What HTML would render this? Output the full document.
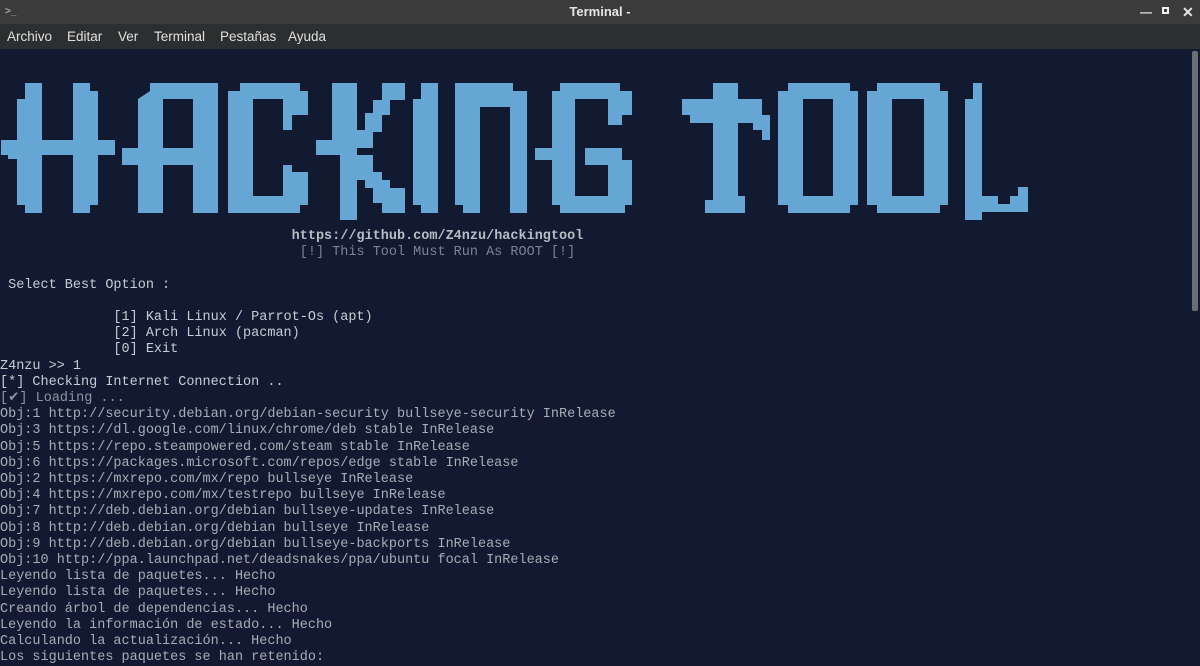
<!DOCTYPE html>
<html><head><meta charset="utf-8"><style>
*{margin:0;padding:0}
body{width:1200px;height:662px;overflow:hidden;background:#111a30;position:relative;font-family:"Liberation Sans",sans-serif}
#tb{position:absolute;left:0;top:0;width:1200px;height:24px;background:#3b3b3b;color:#e6e6e6;font-size:13px;font-weight:bold;text-align:center;line-height:24px}
#mb{position:absolute;left:0;top:24px;width:1200px;height:25px;background:#2c2e30;color:#e0e0e0;font-size:13.5px;line-height:25px}
#mb span{position:absolute;top:0}
pre{position:absolute;left:0;top:229px;font-family:"Liberation Mono",monospace;font-size:13.5px;line-height:16.2px;color:#c9ccd2}
.g{color:#a7acb6}.d{color:#8f94a0}.p{color:#7c8198}.b{font-weight:bold;color:#b8bcc4}
#sb{position:absolute;left:1192px;top:51px;width:6px;height:260px;background:#6a6e74;border-radius:2px}
</style></head><body>
<div id="tb"><span style="position:absolute;left:5px;top:0;font-size:10px;color:#aaa">&gt;_</span>Terminal -
<span style="position:absolute;left:1140px;top:0;font-size:12px">&#8212;</span>
<span style="position:absolute;left:1162px;top:7px;width:7px;height:7px;border:2px solid #eee;box-sizing:border-box"></span>
<span style="position:absolute;left:1182px;top:0;font-size:14px">&#10005;</span></div>
<div id="mb"><span style="left:7px">Archivo</span><span style="left:67px">Editar</span><span style="left:118px">Ver</span><span style="left:154px">Terminal</span><span style="left:220px">Pestañas</span><span style="left:288px">Ayuda</span></div>
<svg style="position:absolute;left:0;top:0" width="1200" height="240" fill="#65a6d4">
<polygon points="25,83 42,83 42,213 25,213 25,205 17,205 17,99 25,99"/>
<polygon points="73,83 90,83 90,91 98,91 98,205 90,205 90,213 73,213"/>
<rect x="1" y="140" width="114" height="15"/><rect x="8" y="155" width="34" height="4"/>
<polygon points="150,83 218,83 218,213 193,213 193,99 163,99 163,213 138,213 138,99 150,91"/>
<rect x="122" y="148" width="96" height="17"/>
<polygon points="240,83 300,83 300,91 308,91 308,115 292,115 292,130 283,130 283,99 253,99 253,196 283,196 283,165 292,165 292,172 308,172 308,205 300,205 300,213 228,213 228,91 240,91"/>
<polygon points="332,83 357,83 357,220 340,220 340,155 316,155 316,140 332,140"/>
<polygon points="357,130 365,130 365,113 373,113 373,100 382,100 382,83 405,83 405,100 390,100 390,115 382,115 382,132 373,132 373,148 357,148"/>
<polygon points="357,155 373,155 373,172 382,172 382,180 390,180 390,188 405,188 405,213 382,213 382,203 373,203 373,188 365,188 365,180 357,180"/>
<polygon points="421,83 438,83 438,213 421,213 421,205 413,205 413,99 421,99"/>
<polygon points="455,83 513,83 513,91 527,91 527,213 510,213 510,107 480,107 480,213 463,213 463,205 455,205"/>
<polygon points="560,83 620,83 620,91 632,91 632,115 622,115 622,125 608,125 608,99 575,99 575,196 608,196 608,165 585,165 585,148 622,148 622,160 632,160 632,205 625,205 625,213 560,213 560,205 552,205 552,160 535,160 535,148 552,148 552,91 560,91"/>
<polygon points="713,83 738,83 738,99 762,99 762,115 770,115 770,140 762,140 762,130 753,130 753,123 738,123 738,196 745,196 745,213 705,213 705,200 713,200 713,123 690,123 690,115 682,115 682,99 713,99"/>
<polygon points="788,83 850,83 850,91 858,91 858,205 850,205 850,213 788,213 788,205 778,205 778,91 788,91"/>
<polygon points="877,83 940,83 940,91 948,91 948,205 940,205 940,213 877,213 877,205 867,205 867,91 877,91"/>
<polygon points="973,83 982,83 982,196 998,196 998,204 1010,204 1010,196 1018,196 1018,187 1028,187 1028,212 982,212 982,220 965,220 965,99 973,99"/>
</svg>
<svg style="position:absolute;left:0;top:0" width="1200" height="240" fill="#111a30">
<rect x="163" y="99" width="30" height="49"/><rect x="803" y="99" width="30" height="97"/><rect x="892" y="99" width="32" height="97"/>
</svg>
<div id="sb"></div>
<pre>                                    <span class="b">https://github.com/Z4nzu/hackingtool</span>
                                     <span class="p">[!] This Tool Must Run As ROOT [!]</span>

 Select Best Option :

              [1] Kali Linux / Parrot-Os (apt)
              [2] Arch Linux (pacman)
              [0] Exit
Z4nzu &gt;&gt; 1
[*] Checking Internet Connection ..
<span class="d">[✔] Loading ...</span>
<span class="g">Obj:1 http://security.debian.org/debian-security bullseye-security InRelease
Obj:3 https://dl.google.com/linux/chrome/deb stable InRelease
Obj:5 https://repo.steampowered.com/steam stable InRelease
Obj:6 https://packages.microsoft.com/repos/edge stable InRelease
Obj:2 https://mxrepo.com/mx/repo bullseye InRelease
Obj:4 https://mxrepo.com/mx/testrepo bullseye InRelease
Obj:7 http://deb.debian.org/debian bullseye-updates InRelease
Obj:8 http://deb.debian.org/debian bullseye InRelease
Obj:9 http://deb.debian.org/debian bullseye-backports InRelease
Obj:10 http://ppa.launchpad.net/deadsnakes/ppa/ubuntu focal InRelease
Leyendo lista de paquetes... Hecho
Leyendo lista de paquetes... Hecho
Creando árbol de dependencias... Hecho
Leyendo la información de estado... Hecho
Calculando la actualización... Hecho
Los siguientes paquetes se han retenido:</span></pre>
</body></html>
